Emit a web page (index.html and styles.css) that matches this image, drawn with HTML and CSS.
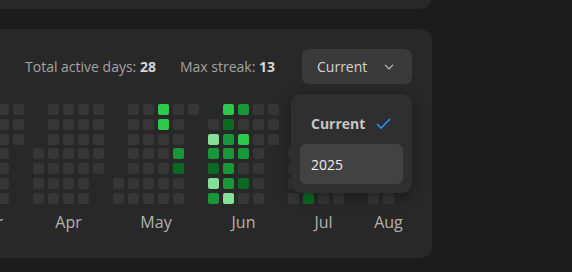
FILE: index.html
```html
<!DOCTYPE html>
<html lang="en">
<head>
    <meta charset="UTF-8">
    <meta name="viewport" content="width=device-width, initial-scale=1.0">
    <title>Activity</title>
    <link rel="stylesheet" href="styles.css">
</head>
<body>
    <div class="card card-top"></div>

    <div class="card activity">
        <div class="activity-header">
            <div class="stat">Total active days: <b>28</b></div>
            <div class="stat">Max streak: <b>13</b></div>
            <div class="select">
                <button class="select-btn">
                    <span>Current</span>
                    <svg width="10" height="6" viewBox="0 0 10 6"><path d="M1 0.8 L5 4.8 L9 0.8" fill="none" stroke="#bdbdbd" stroke-width="1.2"/></svg>
                </button>
                <div class="select-menu">
                    <div class="option selected">
                        <span>Current</span>
                        <svg width="15" height="11" viewBox="0 0 15 11"><path d="M1 6 L5 10 L14 1" fill="none" stroke="#2e8cf0" stroke-width="1.7"/></svg>
                    </div>
                    <div class="option active">2025</div>
                </div>
            </div>
        </div>
        <div class="heatmap" id="heatmap"></div>
    </div>

    <script>
        // contribution level per day: 1 = low ... 4 = high
        const activeDays = {
            '2025-05-17': 3, '2025-05-18': 3, '2025-05-27': 2, '2025-05-28': 1,
            '2025-06-02': 4, '2025-06-03': 2, '2025-06-04': 1, '2025-06-05': 4, '2025-06-06': 2,
            '2025-06-07': 3, '2025-06-08': 1, '2025-06-09': 2, '2025-06-10': 2, '2025-06-11': 2,
            '2025-06-12': 2, '2025-06-13': 4, '2025-06-14': 2, '2025-06-16': 3, '2025-06-17': 2,
            '2025-06-19': 1, '2025-07-11': 1, '2025-07-14': 2, '2025-07-15': 3, '2025-07-16': 2,
            '2025-07-22': 1, '2025-08-04': 2, '2025-08-05': 1
        };
        const monthNames = ['Jan', 'Feb', 'Mar', 'Apr', 'May', 'Jun', 'Jul', 'Aug', 'Sep', 'Oct', 'Nov', 'Dec'];
        const today = new Date(2025, 7, 12);
        const heatmap = document.getElementById('heatmap');

        function pad(n) {
            return String(n).padStart(2, '0');
        }

        for (let m = 0; m <= today.getMonth(); m++) {
            const first = new Date(2025, m, 1);
            const lastDay = m === today.getMonth() ? today.getDate() : new Date(2025, m + 1, 0).getDate();

            const month = document.createElement('div');
            month.className = 'month';
            const weeks = document.createElement('div');
            weeks.className = 'weeks';

            for (let d = 1; d <= lastDay; d++) {
                const cell = document.createElement('div');
                const level = activeDays[`2025-${pad(m + 1)}-${pad(d)}`];
                cell.className = 'day' + (level ? ' l' + level : '');
                // weeks start on Saturday
                if (d === 1) cell.style.gridRowStart = (first.getDay() + 1) % 7 + 1;
                weeks.appendChild(cell);
            }

            const label = document.createElement('div');
            label.className = 'month-label';
            label.textContent = monthNames[m];

            month.appendChild(weeks);
            month.appendChild(label);
            heatmap.appendChild(month);
        }
    </script>
</body>
</html>
```

FILE: styles.css
```css
body {
    margin: 0;
    background: #1c1c1c;
    font-family: "Open Sans", "Noto Sans", sans-serif;
    overflow: hidden;
}
.card {
    background: #282828;
    border-radius: 12px;
    margin-left: -200px;
    width: 632px;
    box-sizing: border-box;
}
.card-top {
    height: 40px;
    margin-top: -31px;
}
.activity {
    margin-top: 20px;
    padding: 20px 20px 0;
    height: 229px;
}
.activity-header {
    display: flex;
    justify-content: flex-end;
    align-items: center;
    gap: 24px;
    height: 35px;
}
.stat {
    font-size: 14px;
    color: #a3a3a3;
}
.stat b {
    color: #d6d6d6;
    font-weight: 700;
}
.select {
    position: relative;
    margin-left: 3px;
}
.select-btn {
    width: 110px;
    height: 35px;
    background: #3a3a3a;
    border: none;
    border-radius: 7px;
    color: #d4d4d4;
    font-family: inherit;
    font-size: 14px;
    display: flex;
    align-items: center;
    justify-content: space-between;
    padding: 0 18px 0 15px;
}
.select-menu {
    position: absolute;
    top: 45px;
    right: 0;
    width: 121px;
    padding: 9px;
    box-sizing: border-box;
    background: #2f2f2f;
    border-radius: 10px;
    box-shadow: 0 4px 14px rgba(0, 0, 0, 0.35);
    z-index: 2;
}
.option {
    height: 40px;
    border-radius: 6px;
    display: flex;
    align-items: center;
    justify-content: space-between;
    padding: 0 12px 0 11px;
    font-size: 14px;
    color: #eeeeee;
}
.option + .option { margin-top: 1px; }
.option.selected {
    font-weight: 700;
    color: #c6c6c6;
}
.option.active { background: #424242; }

.heatmap {
    display: flex;
    justify-content: flex-end;
    gap: 9px;
    margin: 20px 3px 0 0;
    overflow: hidden;
}
.month {
    display: flex;
    flex-direction: column;
    align-items: center;
    flex-shrink: 0;
}
.weeks {
    display: grid;
    grid-auto-flow: column;
    grid-template-rows: repeat(7, 11px);
    grid-auto-columns: 11px;
    column-gap: 4px;
    row-gap: 3.8px;
}
.day {
    border-radius: 2px;
    background: #363636;
}
.day.l1 { background: #0b6a22; }
.day.l2 { background: #17963a; }
.day.l3 { background: #2cc94d; }
.day.l4 { background: #86df96; }
.month-label {
    margin-top: 7px;
    font-size: 16px;
    color: #b2b2b2;
}
```
